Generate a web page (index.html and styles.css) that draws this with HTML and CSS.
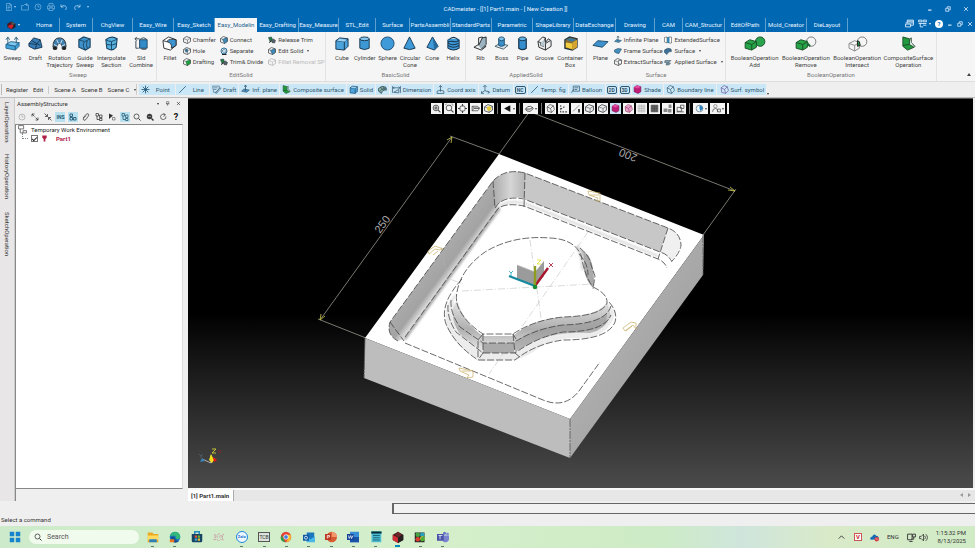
FILE: index.html
```html
<!DOCTYPE html>
<html lang="en">
<head>
<meta charset="utf-8">
<title>CADmeister</title>
<link rel="stylesheet" href="styles.css">
</head>
<body>
<svg class="defs" aria-hidden="true">
  <defs>
    <g id="doc"><path d="M3 1h7l3 3v11H3z M10 1v3h3 M5 6h6 M5 9h6 M5 12h4" fill="none" stroke="currentColor"/></g>
    <g id="open"><path d="M1 14V5h4l2-2h4v2h4v9z M9 3l3-2 2 3" fill="none" stroke="currentColor"/></g>
    <g id="clock"><circle cx="8" cy="8" r="6" fill="none" stroke="currentColor"/><path d="M8 4v4h3" fill="none" stroke="currentColor"/></g>
    <g id="print"><path d="M4 6V1h8v5 M4 12H1V6h14v6h-3 M4 10h8v5H4z M5 8h6" fill="none" stroke="currentColor"/></g>
    <g id="undo"><path d="M2 3v5h5 M2 8q4-5 9-2q4 3 0 8" fill="none" stroke="currentColor" stroke-width="1.6"/></g>
    <g id="redo"><path d="M14 3v5H9 M14 8q-4-5-9-2q-4 3 0 8" fill="none" stroke="currentColor" stroke-width="1.6"/></g>
    <g id="logo"><path d="M1 5l7-4 7 4v6l-7 4-7-4z" fill="#222"/><path d="M1 5l7-4v7l-7 4z" fill="#4b1a20"/><path d="M8 1l7 4-7 3z" fill="#555"/><path d="M3 8l5-2 4 2-4 6-6-3z" fill="#d4202e"/></g>
    <g id="cube"><path d="M2 5l4-3 9 1v8l-4 4-9-1z" fill="#4aa3dc" stroke="#17364f"/><path d="M2 5l9 1v9 M11 6l4-3" fill="none" stroke="#17364f"/><path d="M3 5l3-2 8 1-3 2z" fill="#9bd1f2"/></g>
    <g id="cylinder"><path d="M3 3v10q5 3 10 0V3" fill="#3d98d6" stroke="#17364f"/><ellipse cx="8" cy="3" rx="5" ry="2" fill="#85c4ec" stroke="#17364f"/></g>
    <g id="sphere"><circle cx="8" cy="8" r="7" fill="#3f9ad9" stroke="#205072"/></g>
    <g id="cone"><path d="M8 1l6 12q-6 3-12 0z" fill="#3f9ad9" stroke="#17364f"/></g>
    <g id="pyramid"><path d="M8 1l6 10-4 4-8-3z" fill="#3f9ad9" stroke="#17364f"/><path d="M8 1l2 14 4-4z" fill="#256b9f"/></g>
    <g id="helix"><path d="M2 3v10q6 4 12 0V3" fill="#3f9ad9"/><path d="M3 4q5-5 10 0q0 3-5 2q-5-1-6 1q3 4 11 1 M2 10q6 4 12 0 M2 13q6 4 12 0 M2 4v9 M14 4v9" fill="none" stroke="#17364f" stroke-width="1.1"/></g>
    <g id="sweep"><path d="M1 9l5-3 9 1-4 4z" fill="#80c8ef" stroke="#236791"/><path d="M1 9v4l10 2V11z M11 11l4-4v4l-4 4z" fill="#42a3da" stroke="#236791"/><path d="M3 8V2 M1 4l2-3 2 3 M12 8V2 M10 4l2-3 2 3" fill="none" stroke="#31617e"/></g>
    <g id="draft"><path d="M1 8l5-6 7 2 2 8-8 2-6-3z" fill="#377eb8" stroke="#173651"/><path d="M1 8l8 1 4-5 M9 9l-1 5 M4 5l9 5" fill="none" stroke="#173651"/></g>
    <g id="rotation"><path d="M1 12Q1 2 8 2t7 10l-4 2q0-6-3-6t-3 6z" fill="#407fae" stroke="#262f35"/><path d="M2 9l4 2 M14 9l-4 2 M5 4l2 4 M11 4L9 8" stroke="#d4e8f5"/><circle cx="3" cy="13" r="2" fill="#222"/><circle cx="13" cy="13" r="2" fill="#222"/></g>
    <g id="guide"><path d="M2 4l5-3 7 2v9l-5 3-7-3z" fill="#3e92c9" stroke="#1b4564" stroke-width="1.2"/><path d="M2 4l6 2 6-3 M8 6q-3 4 1 9 M11 5q-2 4 0 8" fill="none" stroke="#1b4564"/></g>
    <g id="interp"><path d="M2 4q6-5 12-1l-1 9q-4 5-10 1z" fill="#56b1df" stroke="#1b4564" stroke-width="1.2"/><path d="M2 4q6 4 12-1 M3 9q6 2 10-1 M8 6v9" fill="none" stroke="#1b4564"/></g>
    <g id="combine"><path d="M6 4h8v9H6z" fill="#318bc8" stroke="#1b4564"/><path d="M6 4q4-4 8 0 M1 3h5 M3 1L1 3l2 2 M2 5v8h3" fill="none" stroke="#35434b"/><path d="M8 14h5" stroke="#222"/></g>
    <g id="fillet"><path d="M1 5l6-4 8 3v6l-6 5-7-2z" fill="#fff" stroke="#303336"/><path d="M5 6q3-4 10-2v6l-5 3q1-6-5-7z" fill="#3b93d0" stroke="#303336"/><path d="M1 5l4 1" stroke="#303336"/></g>
    <g id="box"><path d="M1 5l6-4 8 3v7l-6 4-8-3z" fill="#eee" stroke="#45494c" stroke-width="1.5"/><path d="M1 5l8 3v7 M9 8l6-4" fill="none" stroke="#45494c"/></g>
    <g id="hole"><use href="#box"/><ellipse cx="7" cy="7" rx="3" ry="4" fill="#3d7191"/></g>
    <g id="greenbox"><use href="#box"/><path d="M6 7l7-3 2 6-7 5z" fill="#1ba33d" stroke="#1d5a30"/></g>
    <g id="bluebox"><use href="#box"/><path d="M5 7l8-4 2 7-6 5z" fill="#3e8ab7" stroke="#315064"/></g>
    <g id="separate"><circle cx="8" cy="8" r="6" fill="#fff" stroke="#2b719d" stroke-width="2"/><path d="M5 6l4-2 3 3v4l-4 1-3-2z" fill="#bde0f2" stroke="#304957"/><path d="M4 15h9" stroke="#222" stroke-width="2"/></g>
    <g id="trim"><path d="M1 3l6-1 2 5-5 4z" fill="#217f42" stroke="#234"/><path d="M7 9l4-3 4 3-2 5-5-1z" fill="#55656e" stroke="#222"/><path d="M2 13l5-3" stroke="#222" stroke-width="2"/></g>
    <g id="rib"><path d="M1 12l5-3V2l4-1v9l4 1-5 4z" fill="#eee" stroke="#252a2d"/><path d="M6 10l4-8 4-1v8l-5 5" fill="#9bb3c1" stroke="#252a2d"/></g>
    <g id="boss"><path d="M1 11l5-3 9 2-5 4z" fill="#d8e3e9" stroke="#49616d"/><path d="M5 3v7q3 2 6 0V3z" fill="#3990c9" stroke="#205071"/><ellipse cx="8" cy="3" rx="3" ry="2" fill="#7fc4eb" stroke="#205071"/></g>
    <g id="pipe"><path d="M4 3v10q4 3 8 0V3" fill="#358fce" stroke="#17364f" stroke-width="1.3"/><ellipse cx="8" cy="3" rx="4" ry="2" fill="#62b3e3" stroke="#17364f"/></g>
    <g id="groove"><path d="M1 6l5-5 3 1v5l3-4 3 2v6l-6 4-7-3z" fill="#eee" stroke="#252a2d"/><path d="M1 6l3 1v3l3 1V7l2-5 M9 15V8l5-3" fill="none" stroke="#252a2d"/><path d="M4 7l4-3v5l-1 2-3-1z" fill="#b7c7d0"/></g>
    <g id="container"><path d="M2 4l5-3 8 2v9l-5 3-8-2z" fill="#8a6d32" stroke="#263239" stroke-width="1.3"/><path d="M3 7l7 1v6l-7-2z" fill="#f2cd3e"/><path d="M3 4l5-2 6 2-4 2z" fill="#3b789b"/><path d="M10 7l5-3v8l-5 3z" fill="#d5a42d"/></g>
    <g id="plane"><path d="M0 10l5-5 11 1-6 6z" fill="#3e93ce" stroke="#1d4867"/></g>
    <g id="axisplane"><path d="M1 11l4-4 10 2-5 4z" fill="#4d8db5" stroke="#29536c"/><path d="M8 10V1 M6 3l2-3 2 3" stroke="#29536c" fill="none" stroke-width="1.4"/></g>
    <g id="surface"><path d="M1 6q6-6 13-2l1 5q-7-1-9 6l-5-4z" fill="#3c7097" stroke="#203c52"/></g>
    <g id="mesh"><path d="M1 6q6-6 13-2l1 5q-7-1-9 6l-5-4z" fill="#8fb5a5" stroke="#203c52" stroke-width="1.3"/><path d="M3 12q2-6 11-6 M5 4l4 6 M10 3l1 6" fill="none" stroke="#203c52"/></g>
    <g id="framesurface"><path d="M1 6q6-5 14-2l-5 9q-5 0-9-3z" fill="#418fbd" stroke="#203c52"/></g>
    <g id="extract"><use href="#box"/><path d="M9 5h6v7H9z" fill="#f2f8fb" stroke="#333"/></g>
    <g id="extended"><path d="M1 3l5-1v12l-5-2z M9 2h6v12H9z" fill="#fff" stroke="#333"/><path d="M6 2h5v12H6z" fill="#3987b3"/></g>
    <g id="applied"><path d="M2 5h12l-4 4H1z M5 10h8l-3 4H4z" fill="#7b9eb3" stroke="#384a55"/></g>
    <g id="layers"><path d="M2 4h10l3 3H5z M2 4v8h10l3-4H5l-3 4" fill="none" stroke="#444" stroke-width="1.3"/></g>
    <g id="greencube"><path d="M1 7l5-3 7 2v6l-5 3-7-2z" fill="#26a548" stroke="#174f27"/><path d="M1 7l7 2v6 M8 9l5-3" fill="none" stroke="#174f27"/></g>
    <g id="booladd"><circle cx="17" cy="6" r="5" fill="#2aa44d" stroke="#174f27"/><use href="#greencube"/></g>
    <g id="boolremove"><use href="#greencube"/><circle cx="17" cy="6" r="5" fill="#f5f5f5" stroke="#777"/><path d="M12 5q1 4 4 6" stroke="#176a34" fill="none" stroke-width="2"/></g>
    <g id="boolint"><circle cx="17" cy="6" r="5" fill="none" stroke="#777"/><path d="M3 8l6-3 5 2v6l-5 3-6-3z M3 8l6 2v6 M9 10l5-3" fill="none" stroke="#888"/><path d="M12 5l2 1 1 4-3 1z" fill="#238d42" stroke="#222"/></g>
    <g id="composite"><path d="M2 1l7 2v6l5 3-7 3-5-4z" fill="#239a40" stroke="#174f27"/><path d="M9 3l2-1v5l4 4-1 1" fill="#92aa98" stroke="#426049"/><path d="M2 10l7-1" stroke="#174f27"/></g>
    <g id="point"><path d="M8 1v14 M1 8h14 M3 3l10 10 M13 3L3 13" stroke="#174e70" stroke-width="1.4"/></g>
    <g id="line"><path d="M2 14L14 2" stroke="#174e70" stroke-width="1.3"/></g>
    <g id="sheet"><path d="M1 2h12v4L8 13H3z M3 5h7 M3 8h5 M6 14l8-9 2 1-8 9z" fill="none" stroke="#31566e"/></g>
    <g id="dimension"><path d="M1 2v12 M15 2v12 M2 5h12 M4 3L2 5l2 2 M12 3l2 2-2 2 M3 13l9-5v6z" fill="none" stroke="#31566e" stroke-width="1.3"/></g>
    <g id="coord"><path d="M8 1v11 M5 4l3-3 3 3 M8 9l-6 2v4h12v-4z" fill="none" stroke="#31566e" stroke-width="1.3"/></g>
    <g id="datum"><path d="M7 1v9 M4 3l3-2 3 2 M7 10l-6 4 M7 10l8 3 M1 11v4h4 M12 10l3 3-3 2" fill="none" stroke="#31566e" stroke-width="1.3"/></g>
    <g id="balloon"><path d="M4 2h11v9H4z M4 8l-3 6 M6 5h7 M6 8h5" fill="none" stroke="#31566e" stroke-width="1.3"/></g>
    <g id="poly"><path d="M2 5l5-4 6 2 2 7-5 5-7-2z M2 5l6 3 5-5 M8 8l2 7" fill="none" stroke="currentColor" stroke-width="1.2"/></g>
    <g id="shade"><path d="M2 4l5-3 7 2v9l-5 3-7-3z" fill="#c21c79" stroke="#651744"/><path d="M2 4l6 2 6-3-7-2z" fill="#e84da4"/></g>
    <g id="mag"><circle cx="7" cy="7" r="5" fill="none" stroke="currentColor" stroke-width="1.5"/><path d="M11 11l4 4" stroke="currentColor" stroke-width="2"/></g>
    <g id="magfull"><circle cx="7" cy="7" r="5" fill="currentColor" stroke="currentColor"/><path d="M11 11l4 4" stroke="currentColor" stroke-width="3"/><path d="M4 7h6" stroke="#ddd"/></g>
    <g id="expand"><path d="M2 7V2h5 M2 2l5 5 M14 9v5H9 M14 14L9 9" stroke="currentColor" fill="none" stroke-width="1.5"/></g>
    <g id="shrink"><path d="M7 2v5H2 M1 1l6 6 M9 14V9h5 M9 9l6 6" stroke="currentColor" fill="none" stroke-width="1.5"/></g>
    <g id="tree"><path d="M2 1h5v5H2z M9 4h5v5H9z M9 11h5v4H9z M4 6v7h5" fill="none" stroke="currentColor" stroke-width="1.5"/></g>
    <g id="blocks"><path d="M2 2h5v5H2z M2 9h5v5H2z M9 9h5v5H9z" fill="none" stroke="currentColor" stroke-width="1.8"/></g>
    <g id="grid"><path d="M1 2h6v3H1z M9 2h6v3H9z M1 8h14 M4 8v6h5 M9 11h6" fill="none" stroke="currentColor" stroke-width="1.5"/></g>
    <g id="clip"><path d="M2 10l7-8q4-2 5 2l-6 9q-5 4-6-1l6-7" fill="none" stroke="currentColor" stroke-width="1.4"/></g>
    <g id="pick"><path d="M2 1v11l8-7z" fill="currentColor"/><path d="M9 9h5v5H9z" fill="none" stroke="currentColor"/></g>
    <g id="refresh"><path d="M12 4q-7-4-9 3q0 7 6 6q6-1 5-6 M9 0l4 4-4 3" fill="none" stroke="currentColor" stroke-width="1.4"/></g>
    <g id="windows"><path d="M4 2h11v5H4z M4 4h11 M1 9h9v5H1z M1 7h3 M10 11h5V7" fill="none" stroke="currentColor" stroke-width="1.5"/></g>
    <g id="close"><path d="M3 3l10 10 M13 3L3 13" stroke="currentColor" stroke-width="2"/></g>
    <g id="restore"><path d="M2 6h8v8H2z M6 5V2h8v8h-3" fill="none" stroke="currentColor" stroke-width="2"/></g>
    <g id="minimize"><path d="M3 11h9" stroke="currentColor" stroke-width="3"/></g>
    <g id="monitor"><path d="M1 2h8v10H1z M10 2h5v5h-5z M12 7v4H8 M4 15h6" fill="none" stroke="currentColor" stroke-width="1.6"/></g>
    <g id="speaker"><path d="M1 6h3l4-4v12l-4-4H1z M10 5q3 3 0 6 M12 2q6 6 0 12" fill="none" stroke="currentColor" stroke-width="1.4"/></g>
    <g id="dots"><path d="M2 2h12v12H2z M2 5h12 M2 8h12 M2 11h12 M5 2v12 M8 2v12 M11 2v12" stroke="currentColor" stroke-width="1" fill="none"/></g>
    <linearGradient id="left" x1="441" y1="252" x2="457" y2="264" gradientUnits="userSpaceOnUse"><stop stop-color="#aaa"/><stop offset=".7" stop-color="#a3a3a3"/><stop offset="1" stop-color="#d5d5d5"/></linearGradient>
    <linearGradient id="corner"><stop stop-color="#aaa"/><stop offset=".55" stop-color="#d6d6d6"/><stop offset="1" stop-color="#b4b4b4"/></linearGradient>
    <linearGradient id="right" x2="1" y2="1"><stop stop-color="#bcbcbc"/><stop offset="1" stop-color="#969696"/></linearGradient>
    <linearGradient id="wall" x2="0" y2="1"><stop stop-color="#e2e2e2"/><stop offset=".55" stop-color="#a4a4a4"/><stop offset="1" stop-color="#eee"/></linearGradient>
    <filter id="soft"><feGaussianBlur stdDeviation="1.3"/></filter>
  </defs>
</svg>

<div class="app">
  <header class="titlebar">
    <div class="quick">
      <button aria-label="New"><svg viewBox="0 0 16 16"><use href="#doc"/></svg></button><i class="caret"></i>
      <button aria-label="Open"><svg viewBox="0 0 16 16"><use href="#open"/></svg></button>
      <button aria-label="Recent"><svg viewBox="0 0 16 16"><use href="#clock"/></svg></button>
      <button aria-label="Print"><svg viewBox="0 0 16 16"><use href="#print"/></svg></button>
      <button aria-label="Undo"><svg viewBox="0 0 16 16"><use href="#undo"/></svg></button>
      <button aria-label="Redo"><svg viewBox="0 0 16 16"><use href="#redo"/></svg></button>
      <i class="caret more"></i>
    </div>
    <h1>CADmeister - [[1] Part1.main - [ New Creation ]]</h1>
    <div class="window-buttons">
      <button aria-label="Minimize"><svg viewBox="0 0 16 16"><use href="#minimize"/></svg></button>
      <button aria-label="Restore"><svg viewBox="0 0 16 16"><use href="#restore"/></svg></button>
      <button aria-label="Close"><svg viewBox="0 0 16 16"><use href="#close"/></svg></button>
    </div>
  </header>

  <nav class="tabs">
    <button class="app-menu" aria-label="Application menu"><svg viewBox="0 0 16 16"><use href="#logo"/></svg><i class="caret"></i></button>
    <button>Home</button><button>System</button><button>ChgView</button><button>Easy_Wire</button><button>Easy_Sketch</button><button class="active">Easy_Modelin</button><button>Easy_Drafting</button><button>Easy_Measure</button><button>STL_Edit</button><button>Surface</button><button>PartsAssembli</button><button>StandardParts</button><button>Parametric</button><button>ShapeLibrary</button><button>DataExchange</button><button>Drawing</button><button>CAM</button><button>CAM_Structur</button><button>EditOfPath</button><button>Mold_Creator</button><button>DieLayout</button>
    <div class="tab-tools">
      <svg viewBox="0 0 16 16"><use href="#windows"/></svg><svg viewBox="0 0 16 16"><use href="#grid"/></svg><i class="caret"></i><span class="help">?</span><svg class="tiny" viewBox="0 0 16 16"><use href="#minimize"/></svg><svg class="tiny" viewBox="0 0 16 16"><use href="#restore"/></svg><svg class="tiny" viewBox="0 0 16 16"><use href="#close"/></svg>
    </div>
  </nav>

  <section class="ribbon">
    <div class="group">
      <div class="tools sweep-tools">
        <button class="big"><svg viewBox="0 0 16 16"><use href="#sweep"/></svg>Sweep</button>
        <button class="big"><svg viewBox="0 0 16 16"><use href="#draft"/></svg>Draft</button>
        <button class="big"><svg viewBox="0 0 16 16"><use href="#rotation"/></svg>Rotation<br>Trajectory</button>
        <button class="big"><svg viewBox="0 0 16 16"><use href="#guide"/></svg>Guide<br>Sweep</button>
        <button class="big"><svg viewBox="0 0 16 16"><use href="#interp"/></svg>Interpolate<br>Section</button>
        <button class="big"><svg viewBox="0 0 16 16"><use href="#combine"/></svg>Sld<br>Combine</button>
      </div><h2>Sweep</h2>
    </div>
    <div class="group">
      <div class="tools edit-tools">
        <button class="big"><svg viewBox="0 0 16 16"><use href="#fillet"/></svg>Fillet</button>
        <div class="stack">
          <button><svg viewBox="0 0 16 16"><use href="#box"/></svg>Chamfer</button>
          <button><svg viewBox="0 0 16 16"><use href="#hole"/></svg>Hole</button>
          <button><svg viewBox="0 0 16 16"><use href="#greenbox"/></svg>Drafting</button>
        </div>
        <div class="stack">
          <button><svg viewBox="0 0 16 16"><use href="#bluebox"/></svg>Connect</button>
          <button><svg viewBox="0 0 16 16"><use href="#separate"/></svg>Separate</button>
          <button><svg viewBox="0 0 16 16"><use href="#trim"/></svg>Trim&amp; Divide</button>
        </div>
        <div class="stack">
          <button><svg viewBox="0 0 16 16"><use href="#trim"/></svg>Release Trim</button>
          <button><svg viewBox="0 0 16 16"><use href="#bluebox"/></svg>Edit Solid<i class="caret"></i></button>
          <button disabled><svg viewBox="0 0 16 16"><use href="#box"/></svg>Fillet Removal SP</button>
        </div>
      </div><h2>EditSolid</h2>
    </div>
    <div class="group">
      <div class="tools basic-tools">
        <button class="big"><svg viewBox="0 0 16 16"><use href="#cube"/></svg>Cube</button>
        <button class="big"><svg viewBox="0 0 16 16"><use href="#cylinder"/></svg>Cylinder</button>
        <button class="big"><svg viewBox="0 0 16 16"><use href="#sphere"/></svg>Sphere</button>
        <button class="big"><svg viewBox="0 0 16 16"><use href="#cone"/></svg>Circular<br>Cone</button>
        <button class="big"><svg viewBox="0 0 16 16"><use href="#pyramid"/></svg>Cone</button>
        <button class="big"><svg viewBox="0 0 16 16"><use href="#helix"/></svg>Helix</button>
      </div><h2>BasicSolid</h2>
    </div>
    <div class="group">
      <div class="tools applied-tools">
        <button class="big"><svg viewBox="0 0 16 16"><use href="#rib"/></svg>Rib</button>
        <button class="big"><svg viewBox="0 0 16 16"><use href="#boss"/></svg>Boss</button>
        <button class="big"><svg viewBox="0 0 16 16"><use href="#pipe"/></svg>Pipe</button>
        <button class="big"><svg viewBox="0 0 16 16"><use href="#groove"/></svg>Groove</button>
        <button class="big"><svg viewBox="0 0 16 16"><use href="#container"/></svg>Container<br>Box</button>
      </div><h2>AppliedSolid</h2>
    </div>
    <div class="group">
      <div class="tools surface-tools">
        <button class="big"><svg viewBox="0 0 16 16"><use href="#plane"/></svg>Plane</button>
        <div class="stack">
          <button><svg viewBox="0 0 16 16"><use href="#axisplane"/></svg>Infinite Plane</button>
          <button><svg viewBox="0 0 16 16"><use href="#framesurface"/></svg>Frame Surface</button>
          <button><svg viewBox="0 0 16 16"><use href="#extract"/></svg>ExtractSurface</button>
        </div>
        <div class="stack">
          <button><svg viewBox="0 0 16 16"><use href="#extended"/></svg>ExtendedSurface</button>
          <button><svg viewBox="0 0 16 16"><use href="#surface"/></svg>Surface<i class="caret"></i></button>
          <button><svg viewBox="0 0 16 16"><use href="#applied"/></svg>Applied Surface<i class="caret"></i></button>
        </div>
      </div><h2>Surface</h2>
    </div>
    <div class="group">
      <div class="tools bool-tools">
        <button class="big wide"><svg viewBox="0 0 23 16"><use href="#booladd"/></svg>BooleanOperation<br>Add</button>
        <button class="big wide"><svg viewBox="0 0 23 16"><use href="#boolremove"/></svg>BooleanOperation<br>Remove</button>
        <button class="big wide"><svg viewBox="0 0 23 16"><use href="#boolint"/></svg>BooleanOperation<br>Intersect</button>
        <button class="big"><svg viewBox="0 0 16 16"><use href="#composite"/></svg>CompositeSurface<br>Operation</button>
      </div><h2>BooleanOperation</h2>
    </div>
    <button class="collapse" aria-label="Collapse ribbon"><i class="caret up"></i></button>
  </section>

  <div class="filters">
    <div class="scenes"><button>Register</button><button>Edit</button><i></i><button>Scene A</button><button>Scene B</button><button>Scene C</button><span class="caret"></span></div>
    <div class="filter-list">
      <button><svg viewBox="0 0 16 16"><use href="#point"/></svg><span>Point</span></button>
      <button><svg viewBox="0 0 16 16"><use href="#line"/></svg><span>Line</span></button>
      <button><svg viewBox="0 0 16 16"><use href="#sheet"/></svg>Draft</button>
      <button><svg viewBox="0 0 16 16"><use href="#axisplane"/></svg>Inf. plane</button>
      <button><svg viewBox="0 0 16 16"><use href="#composite"/></svg>Composite surface</button>
      <button><svg viewBox="0 0 16 16"><use href="#cube"/></svg>Solid</button>
      <button aria-label="Mesh"><svg viewBox="0 0 16 16"><use href="#mesh"/></svg></button>
      <button><svg viewBox="0 0 16 16"><use href="#dimension"/></svg>Dimension</button>
      <button><svg viewBox="0 0 16 16"><use href="#coord"/></svg>Coord axis</button>
      <button><svg viewBox="0 0 16 16"><use href="#datum"/></svg>Datum</button>
      <button><b>NC</b></button>
      <button><svg viewBox="0 0 16 16"><use href="#line"/></svg>Temp. fig</button>
      <button><svg viewBox="0 0 16 16"><use href="#balloon"/></svg>Balloon</button>
      <button><b>2D</b></button>
      <button><b>3D</b></button>
      <button><svg viewBox="0 0 16 16"><use href="#shade"/></svg>Shade</button>
      <button><svg viewBox="0 0 16 16"><use href="#poly"/></svg>Boundary line</button>
      <button class="violet"><svg viewBox="0 0 16 16"><use href="#poly"/></svg>Surf. symbol</button>
      <i class="caret"></i>
    </div>
  </div>

  <main class="workspace">
    <nav class="side-tabs"><button>LayerOperation</button><button>HistoryOperation</button><button>SketchOperation</button></nav>

    <aside class="panel">
      <header><h2>AssemblyStructure</h2><i class="caret"></i><svg viewBox="0 0 16 16"><path d="M5 2h7v7H5z M3 9h11 M8 9v6" fill="none" stroke="currentColor" stroke-width="1.5"/></svg><svg viewBox="0 0 16 16"><use href="#close"/></svg></header>
      <div class="panel-tools">
        <button aria-label="History" class="dim"><svg viewBox="0 0 16 16"><use href="#clock"/></svg></button>
        <button aria-label="Expand"><svg viewBox="0 0 16 16"><use href="#expand"/></svg></button>
        <button aria-label="Shrink"><svg viewBox="0 0 16 16"><use href="#shrink"/></svg></button>
        <button class="on">INS</button>
        <button aria-label="Layout" class="on"><svg viewBox="0 0 16 16"><use href="#blocks"/></svg></button>
        <button aria-label="Attach"><svg viewBox="0 0 16 16"><use href="#clip"/></svg></button>
        <button aria-label="Tree"><svg viewBox="0 0 16 16"><use href="#tree"/></svg></button>
        <button aria-label="Pick"><svg viewBox="0 0 16 16"><use href="#pick"/></svg></button>
        <button aria-label="Structure" class="on"><svg viewBox="0 0 16 16"><use href="#tree"/></svg></button>
        <button aria-label="Search"><svg viewBox="0 0 16 16"><use href="#mag"/></svg></button>
        <button aria-label="Zoom out"><svg viewBox="0 0 16 16"><use href="#magfull"/></svg></button>
        <button aria-label="Refresh"><svg viewBox="0 0 16 16"><use href="#refresh"/></svg></button>
        <button class="question">?</button>
      </div>
      <ul class="assembly">
        <li><svg viewBox="0 0 16 16"><path d="M1 1h9v6H1z M4 7v7h5 M9 10h6v4H9z" fill="#fff" stroke="#555" stroke-width="1.4"/></svg>Temporary Work Environment</li>
        <li class="child"><i class="branch"></i><input id="part" type="checkbox" checked><svg viewBox="0 0 16 16"><path d="M3 1h10v5l-3 3v6H6V9L3 6z" fill="#b02046"/></svg><label for="part">Part1</label></li>
      </ul>
      <div class="panel-foot"></div>
    </aside>

    <section class="document">
      <div class="canvas">
        <svg class="model" viewBox="188 99 785 389" preserveAspectRatio="xMidYMid slice" role="img" aria-label="Part1 model">
          <g stroke="#98958a" stroke-width=".8" fill="none">
            <path d="M499 154L450 136 M452 137L320 320 M318 319l48 19 M499 154l31-43 M528 111l207 80 M703 235l33-46"/>
            <path d="M452 137l-1 6 M452 137l-5 3 M320 320l1-6 M320 320l5-4 M735 191l-7-1 M735 191l-5-4 M528 111l7 1" stroke="#d0cc45"/>
          </g>
          <g class="measure"><text transform="translate(380 234) rotate(-54)">250</text><text transform="translate(638 155) rotate(201)">200</text></g>
          <path d="M499 154L704 235L570 419L365 338z" fill="#fff"/>
          <path d="M365 338L570 419V458L364 378z" fill="#bdbdbd"/>
          <path d="M704 235L703 275L570 458V419z" fill="url(#right)"/>
          <path d="M499 208L404 339" stroke="#888" stroke-width="4" opacity=".7" filter="url(#soft)"/>
          <path d="M390 322L493 181L497 207L404 339L398 341Q386 335 390 322z" fill="url(#left)"/>
          <path d="M493 181Q505 168 525 173V198Q503 195 495 208z" fill="url(#corner)"/>
          <path d="M525 173L668 228L660 252L524 199z" fill="#c7c7c7"/>
          <path d="M668 228Q681 233 681 246L673 260L660 252z" fill="#f0f0f0"/>
          <path d="M496 210Q503 199 524 203L658 256" stroke="#bbb" stroke-width="2" fill="none" opacity=".6" filter="url(#soft)"/>
          <path d="M457 292Q451 303 458 313Q468 330 483 336H513Q533 319 563 317Q599 316 607 302L615 312Q613 330 590 338Q558 336 540 347Q527 357 515 360L482 361Q455 348 447 327Q441 306 457 292z" fill="#ececec"/>
          <path d="M483 336H513Q533 319 563 317Q599 316 607 302L611 316Q605 330 590 333Q560 331 537 340L515 353H483L460 334Q447 315 457 300Q464 323 483 336z" fill="url(#wall)" opacity=".85"/>
          <path d="M483 343H514V353H483z" fill="#aaa"/>
          <path d="M514 343Q534 327 563 325Q595 324 607 313L606 324Q595 332 563 332Q538 337 515 352z" fill="#999" opacity=".65"/>
          <path d="M575 245Q584 252 584 270Q586 281 593 288L594 280Q594 264 588 255z" fill="#aaa"/>
          <path d="M577 246Q583 255 583 270" stroke="#ddd" stroke-width="4" fill="none" filter="url(#soft)"/>
          <g class="edges">
            <path d="M398 341Q386 335 390 322L493 181Q505 168 525 173L668 228Q681 233 681 246Q679 254 672 261"/>
            <path d="M405 343L543 400Q565 409 579 391L600 362 M405 337L497 210Q503 202 524 206L658 259Q665 262 667 268"/>
            <path d="M493 181L495 208Q503 195 524 199L660 252Q668 254 672 262 M525 173L524 207 M668 228L658 259 M390 322L404 341"/>
            <path d="M457 292Q461 269 485 252Q513 235 550 238Q574 239 581 255Q585 277 593 287Q608 294 607 303Q602 316 563 317Q534 320 513 334H483Q466 323 459 309Q455 301 457 292z"/>
            <path d="M451 300Q450 313 460 327L483 343H513Q534 329 563 325Q606 324 611 306"/>
            <path d="M448 305Q447 318 456 332L483 353H515Q537 337 563 332Q604 332 611 315"/>
            <path d="M462 279Q439 304 446 324Q455 345 478 360L515 360Q535 344 563 340Q608 340 615 322Q618 312 609 302"/>
            <path d="M580 248Q590 256 591 265L595 276L593 289 M579 254Q588 263 588 275"/>
            <path d="M483 334V353L478 360 M513 334L515 353L521 358 M483 334L478 340V358 M513 334L516 339"/>
          </g>
          <path d="M570 419V458 M365 338L364 378 M703 235V275" stroke="#555" stroke-width=".8" stroke-dasharray="8 1 2 1" fill="none"/>
          <path d="M588 232L489 374 M462 291L593 284 M530 240L541 318 M441 247L447 278L463 284" stroke="#b5b5b5" stroke-width=".5" stroke-dasharray="7 2 1 2" fill="none"/>
          <g fill="none" stroke="#c8ae60" stroke-width=".7">
            <path d="M428 251l7-5 8 3-3 1-5-1-6 5z M433 255l5-4"/><path d="M588 191l12 2v8h-4l2-3-9-3z M590 195h9"/><path d="M623 328l8-6 5 1v6l-3-4-8 6z M626 331l6-5"/><path d="M459 368l14 3v6l-6 1 2-3-9-4z M462 371h9"/>
          </g>
          <path d="M517 265l18 7 9-11v15l-9 9-18-6z" fill="#9b9b9b"/><path d="M517 265l18 7v12" fill="none" stroke="#bbb" stroke-width=".7"/>
          <g stroke-width="2.4" fill="none"><path d="M535 286l-26-10" stroke="#15899d"/><path d="M535 286l13-18" stroke="#a7162d"/><path d="M535 286v-20" stroke="#8e9d1e"/></g><circle cx="535" cy="287" r="2.3" fill="#168c35"/>
          <g stroke-width=".8" fill="none"><path d="M509 271l2 2 2-2 M511 273v3" stroke="#18a5b9"/><path d="M549 263l4 4 M553 263l-4 4" stroke="#a7162d"/><path d="M537 260h4l-4 4h4" stroke="#dede26"/></g>
          <path d="M211 463v-8 M211 463l-9-4 M211 463l4-5" stroke="#ddd" fill="none" stroke-width=".7"/><path d="M209 460l2-6 3 6-2 3z" fill="#f2dc15"/><path d="M213 457l4 3-3 2z" fill="#e11"/><path d="M202 458l3 3-5 1z" fill="#3683ba"/>
          <g stroke-width=".8" fill="none"><path d="M212 449h4l-4 4h4" stroke="#e4df30"/><path d="M218 450l3 3 M221 450l-3 3" stroke="#8f1f27"/><path d="M199 454l2 2 2-2 M201 456v2" stroke="#50656c"/></g>
        </svg>
        <div class="view-tools">
          <button aria-label="Zoom area"><svg viewBox="0 0 16 16"><use href="#mag"/><circle cx="7" cy="7" r="3" fill="#777"/></svg></button>
          <button aria-label="Zoom"><svg viewBox="0 0 16 16"><use href="#mag"/><path d="M1 2V0h3 M10 0h4v4" fill="none" stroke="#777"/></svg></button>
          <button aria-label="Fit"><svg viewBox="0 0 16 16"><circle cx="8" cy="8" r="5" fill="none" stroke="#444" stroke-width="1.4"/><path d="M8 0v4 M8 12v4 M0 8h4 M12 8h4" stroke="#444" stroke-width="2"/></svg></button>
          <button aria-label="Previous view"><svg viewBox="0 0 16 16"><use href="#layers"/></svg></button>
          <button aria-label="View cube"><svg viewBox="0 0 16 16"><use href="#box"/><circle cx="9" cy="8" r="4" fill="#e3ca32"/></svg></button><i class="bar"></i>
          <button class="drop" aria-label="Arrow"><svg viewBox="0 0 16 16"><path d="M2 8l11-6v12z" fill="#111"/></svg><i class="caret"></i></button><i class="bar"></i>
          <button class="drop" aria-label="Rotate"><svg viewBox="0 0 16 16"><path d="M1 9q3-6 9-5l5 4-6 5q-7 1-8-4h8l5-3" fill="none" stroke="#444" stroke-width="1.5"/></svg><i class="caret"></i></button><i class="bar"></i>
          <button aria-label="Wireframe"><svg viewBox="0 0 16 16"><use href="#poly"/></svg></button>
          <button aria-label="Points"><svg viewBox="0 0 16 16"><path d="M3 2v12h11 M3 9l8-5" stroke="#444" fill="none" stroke-width="2" stroke-dasharray="3 2"/></svg></button>
          <button aria-label="Line display"><svg viewBox="0 0 16 16"><path d="M2 13L13 2" stroke="#444"/><path d="M11 9h3v6h-3z" fill="#222"/></svg></button>
          <button aria-label="Hidden lines"><svg viewBox="0 0 16 16"><use href="#box"/></svg></button>
          <button aria-label="Outline"><svg viewBox="0 0 16 16"><use href="#box"/></svg></button>
          <button class="selected" aria-label="Shaded"><svg viewBox="0 0 16 16"><use href="#shade"/></svg></button>
          <button class="pink" aria-label="Transparent"><svg viewBox="0 0 16 16"><circle cx="8" cy="8" r="6" fill="#e8a2c8"/><use href="#poly"/></svg></button>
          <button class="light" aria-label="Light grid"><svg viewBox="0 0 16 16"><use href="#dots"/></svg></button>
          <button aria-label="Dark grid"><svg viewBox="0 0 16 16"><path d="M2 2h12v12H2z" fill="#777"/><use href="#dots"/></svg></button>
          <button aria-label="Section"><svg viewBox="0 0 16 16"><path d="M1 8h7v6H1z M10 1h5v6h-5z M9 9h6v6H9z" fill="#888"/></svg></button>
          <button aria-label="Display"><svg viewBox="0 0 16 16"><path d="M2 6h8v7H2z M8 2h6v6H8z M1 14h13" fill="none" stroke="#444" stroke-width="1.3"/></svg></button><i class="bar"></i>
          <button class="drop" aria-label="Material"><svg viewBox="0 0 16 16"><circle cx="8" cy="8" r="6" fill="#e8f4fb" stroke="#3a5364"/><path d="M8 8V2q6 1 6 6l-4 5z" fill="#2d83c0"/></svg><i class="caret"></i></button>
          <button class="drop" aria-label="User"><svg viewBox="0 0 16 16"><circle cx="6" cy="4" r="3" fill="none" stroke="#555"/><path d="M1 14q0-6 5-6t4 6 M10 9h5v5h-5z" fill="none" stroke="#555" stroke-width="1.4"/></svg><i class="caret"></i></button>
          <i class="end"></i>
        </div>
      </div>
      <div class="doc-tabs"><button>[1] Part1.main</button><span><i class="arrow prev"></i><i class="arrow next"></i></span></div>
    </section>
  </main>

  <div class="command"><input type="text" aria-label="Command"></div>
  <div class="status">Select a command</div>

  <footer class="taskbar">
    <button class="start" aria-label="Start"><svg viewBox="0 0 16 16"><path d="M1 1h6v6H1z M9 1h6v6H9z M1 9h6v6H1z M9 9h6v6H9z" fill="#1683cd"/></svg></button>
    <div class="search"><svg viewBox="0 0 16 16"><use href="#mag"/></svg><input type="text" placeholder="Search" aria-label="Search"></div>
    <div class="apps">
      <button class="run" aria-label="Files"><svg viewBox="0 0 16 16"><path d="M1 2h6l2 2h6v11H1z" fill="#eba922"/><path d="M1 6h14v6H1z" fill="#ffdb62"/><path d="M3 11h10v4H3z" fill="#2d81bd"/></svg></button>
      <button class="run" aria-label="Edge"><svg viewBox="0 0 16 16"><circle cx="8" cy="8" r="7" fill="#1676bd"/><path d="M1 7Q4-1 12 2q5 5 2 8-5 2-5-1 1-5-8-2z" fill="#36b879"/><path d="M2 9q5-4 6 1 1 4 6 3-6 5-10 0z" fill="#164e91"/><path d="M1 11h6v4H1z" fill="#e97825"/></svg></button>
      <button aria-label="Store"><svg viewBox="0 0 16 16"><path d="M5 4V1h6v3" fill="none" stroke="#278ac0" stroke-width="2"/><path d="M1 4h14v9q0 2-2 2H3q-2 0-2-2z" fill="#174465"/><path d="M5 6h3v3H5z" fill="#e45438"/><path d="M9 6h3v3H9z" fill="#6baf34"/><path d="M5 10h3v3H5z" fill="#38a2db"/><path d="M9 10h3v3H9z" fill="#ebbf31"/></svg></button>
      <button aria-label="Mesh tool"><svg viewBox="0 0 16 16"><path d="M2 4l3 3 3-4 3 4 3-3-2 5 2 3-4-1-2 2-3-2-4 1 2-4z M2 8h12" stroke="#c99aa4" stroke-dasharray="2 1" stroke-width="1.2" fill="none"/></svg></button>
      <button class="run zalo"><span>Zalo</span></button>
      <button class="run tcb"><span>TCB</span></button>
      <button class="run" aria-label="Chrome"><svg viewBox="0 0 16 16"><circle cx="8" cy="8" r="7" fill="#e54335"/><path d="M2 5l5 10Q0 14 2 5z" fill="#2ba24c"/><path d="M8 5h6q3 8-6 10l3-5z" fill="#f6c32d"/><path d="M1 8l5 7q-6-2-5-7z" fill="#2ba24c"/><circle cx="8" cy="8" r="3" fill="#3d7fe0" stroke="#fff"/></svg></button>
      <button class="run" aria-label="Outlook"><svg viewBox="0 0 16 16"><path d="M5 2h10v12H5z" fill="#1b76bc"/><path d="M5 7l5 4 6-4v8H5z" fill="#4ab7e8"/><path d="M0 5h8v8H0z" fill="#0c5aa4"/><circle cx="4" cy="9" r="2" fill="none" stroke="#fff"/></svg></button>
      <button class="run" aria-label="PowerPoint"><svg viewBox="0 0 16 16"><circle cx="9" cy="8" r="7" fill="#d85a30"/><path d="M9 1q7 1 7 7H9z" fill="#f3976d"/><path d="M0 4h8v8H0z" fill="#b93820"/><path d="M3 10V6h3v2H3" stroke="#fff" fill="none"/></svg></button>
      <button class="run" aria-label="Word"><svg viewBox="0 0 16 16"><path d="M4 1h12v14H4z" fill="#368dd5"/><path d="M4 8h12v7H4z" fill="#1951a6"/><path d="M0 4h9v8H0z" fill="#124398"/><path d="M2 6l1 4 2-4 1 4 2-4" stroke="#fff" fill="none"/></svg></button>
      <button class="run" aria-label="Notes"><svg viewBox="0 0 16 16"><path d="M2 2h13v13H2z" fill="#4ebbd1"/><path d="M2 1h13v2H2z M4 6h9 M4 9h9 M4 12h9" stroke="#17677a" stroke-width="1.3"/></svg></button>
      <button class="run current" aria-label="CADmeister"><svg viewBox="0 0 16 16"><path d="M1 5l7-4 7 4v7l-7 4-7-4z" fill="#39191b"/><path d="M1 5l7 4v7l-7-4z" fill="#d22e37"/><path d="M8 9l7-4v7l-7 4z" fill="#242020"/><path d="M8 1l5 4-5 4-4-4z" fill="#6d292b"/></svg></button>
      <button class="run" aria-label="Viewer"><svg viewBox="0 0 16 16"><path d="M1 2h13v13H1z" fill="#292929"/><circle cx="5" cy="5" r="3" fill="#45a544"/><circle cx="11" cy="5" r="3" fill="#27a2bc"/><circle cx="5" cy="11" r="3" fill="#db3e31"/><circle cx="11" cy="10" r="3" fill="#eabf26"/><path d="M9 9l5-2v6l-5 1z" fill="#4caf35"/></svg></button>
      <button class="run" aria-label="Teams"><svg viewBox="0 0 16 16"><circle cx="10" cy="3" r="2" fill="#6571c7"/><circle cx="14" cy="4" r="2" fill="#8993dc"/><path d="M7 6h9v6q-3 5-8 2z" fill="#7b83d0"/><path d="M0 4h9v9H0z" fill="#4852a9"/><path d="M2 6h5 M4 6v5" stroke="#fff"/></svg></button>
    </div>
    <div class="tray"><svg viewBox="0 0 16 16"><path d="M3 10l5-5 5 5" fill="none" stroke="currentColor" stroke-width="1.6"/></svg><span class="vbox">V</span><svg viewBox="0 0 16 16"><path d="M1 12q-2-5 3-6 3-6 7-1 5 0 4 6z" fill="#176db4"/><circle cx="12" cy="11" r="4" fill="#d93d42"/><path d="M10 9l4 4" stroke="#fff"/></svg><span class="lang">ENG</span><svg viewBox="0 0 16 16"><use href="#monitor"/></svg><svg viewBox="0 0 16 16"><use href="#speaker"/></svg><time>1:15:32 PM<br>8/13/2025</time></div>
  </footer>
</div>
</body>
</html>
```

FILE: styles.css
```css
* { box-sizing: border-box; }
body { margin: 0; font: 6px/8px Roboto, "Open Sans", sans-serif; color: #333; }
.defs { position: absolute; width: 0; height: 0; }
button { font: inherit; color: inherit; background: none; border: 0; padding: 0; margin: 0; white-space: nowrap; }
h1, h2 { font: inherit; margin: 0; }
svg { flex: none; display: block; overflow: visible; }

.app { display: flex; flex-direction: column; height: 100vh; overflow: hidden; background: #f0efef; }
.caret { display: inline-block; flex: none; width: 0; height: 0; border: 1px solid transparent; border-top: 2px solid currentColor; border-bottom: 0; }
.caret.up { border-top: 0; border-bottom: 3px solid currentColor; border-left-width: 2px; border-right-width: 2px; }

.titlebar { flex: none; height: 18px; display: grid; grid-template-columns: 1fr auto 1fr; background: #0067b3; color: #e8f4ff; }
.titlebar h1 { padding: 5px 0 0 36px; }
.quick { display: flex; align-items: flex-start; gap: 5px; padding: 3px 5px; color: #a9d0ed; }
.quick svg { width: 8px; height: 8px; }
.quick .caret { margin: 3px 0 0 -4px; }
.quick .more { margin-left: 1px; }
.window-buttons { display: flex; justify-content: flex-end; gap: 12px; padding: 3px 6px; }
.window-buttons svg { width: 6px; height: 6px; }

.tabs { flex: none; height: 14px; display: grid; grid-template-columns: 29fr 31fr 33fr 40fr 41fr 41fr 42fr 42fr 40fr 37fr 34fr 41fr 41fr 41fr 41fr 42fr 39fr 28fr 42fr 41fr 41fr 41fr 127fr; background: #0067b3; color: #e8f4ff; }
.tabs > button { min-width: 0; overflow: hidden; border-right: 1px solid #5d9fcf; }
.tabs > .app-menu { display: flex; align-items: center; gap: 2px; padding-left: 7px; border: 0; }
.app-menu svg { width: 9px; height: 9px; }
.tabs > .active { background: #f5f5f5; color: #235e8c; border: 0; }
.tab-tools { display: flex; align-items: center; justify-content: flex-end; gap: 4px; padding: 0 2px 3px 0; }
.tab-tools svg { width: 9px; height: 9px; }
.tab-tools .tiny { width: 6px; height: 6px; }
.tab-tools .caret { margin-left: -2px; }
.help { width: 8px; height: 8px; border-radius: 4px; background: #fff; color: #0067b3; text-align: center; font-weight: bold; }

.ribbon { flex: none; height: 50px; display: grid; grid-template-columns: 157fr 169fr 140fr 121fr 139fr 211fr 38fr; background: #f5f5f5; border-bottom: 1px solid #dedede; color: #444; }
.group { min-width: 0; display: flex; flex-direction: column; justify-content: space-between; border-right: 1px solid #e3e3e3; padding-bottom: 2px; }
.group h2 { text-align: center; color: #777; }
.tools { display: grid; padding-top: 4px; }
.sweep-tools { grid-template-columns: 25fr 21fr 28fr 23fr 30fr 30fr; }
.edit-tools { grid-template-columns: 26fr 37fr 49fr 57fr; }
.basic-tools { grid-template-columns: 22fr 24fr 22fr 23fr 22fr 20fr; padding-left: 5px; padding-right: 2px; }
.applied-tools { grid-template-columns: 21fr 22fr 20fr 24fr 28fr; padding-left: 4px; padding-right: 2px; }
.surface-tools { grid-template-columns: 27fr 51fr 61fr; }
.bool-tools { grid-template-columns: repeat(4, 1fr); padding-left: 3px; padding-right: 2px; }
.big { min-width: 0; display: flex; flex-direction: column; align-items: center; align-self: start; text-align: center; line-height: 7px; }
.big svg { width: 15px; height: 15px; margin-bottom: 3px; }
.big.wide svg { width: 22px; }
.stack { min-width: 0; display: flex; flex-direction: column; gap: 3px; }
.stack button { display: flex; align-items: center; gap: 2px; height: 8px; }
.stack svg { width: 8px; height: 8px; }
.stack .caret { margin-left: 2px; }
.stack button:disabled { color: #bbb; }
.stack button:disabled svg { opacity: .4; }
.collapse { align-self: end; justify-self: end; padding: 0 4px 3px 0; }

.filters { flex: none; height: 16px; display: grid; grid-template-columns: 138fr 837fr; padding: 2px 0; border-bottom: 1px solid #bbb; }
.scenes { display: flex; align-items: center; gap: 5px; margin-left: 1px; padding-left: 4px; border-left: 1px solid #bbb; border-right: 1px solid #ccc; margin-right: 2px; }
.scenes i { border-left: 1px solid #ccc; height: 8px; }
.filter-list { display: grid; column-gap: 1px; grid-template-columns: 36fr 33fr 28fr 40fr 66fr 28fr 13fr 43fr 44fr 34fr 13fr 40fr 36fr 12fr 12fr 31fr 53fr 49fr 208fr; }
.filter-list button { min-width: 0; overflow: hidden; display: flex; align-items: center; justify-content: center; gap: 2px; background: #cae7f7; color: #31566e; }
.filter-list svg { width: 9px; height: 9px; }
.filter-list span { padding: 0 4px; }
.filter-list b { border: 1px solid #31566e; border-radius: 2px; line-height: 6px; padding: 0 1px; font-size: 5px; }
.filter-list .violet svg { color: #67569a; }
.filter-list > .caret { align-self: end; }

.workspace { flex: 1; min-height: 0; display: flex; }
.side-tabs { flex: none; width: 15px; display: flex; flex-direction: column; align-items: center; gap: 12px; padding-top: 4px; border-right: 1px solid #ccc; background: #e8e6e6; }
.side-tabs button { writing-mode: vertical-rl; }
.panel { flex: none; width: 168px; display: flex; flex-direction: column; margin-right: 5px; }
.panel header { height: 11px; display: flex; align-items: center; gap: 6px; padding: 0 2px; }
.panel header h2 { flex: 1; }
.panel header svg { width: 5px; height: 5px; }
.panel-tools { height: 15px; display: flex; align-items: center; justify-content: space-between; padding: 0 2px; }
.panel-tools button { width: 10px; height: 10px; display: grid; place-items: center; }
.panel-tools svg { width: 8px; height: 8px; }
.panel-tools .on { background: #b8e0ee; color: #245b76; font-size: 5px; font-weight: bold; }
.panel-tools .dim { color: #888; }
.panel-tools .question { font-size: 9px; font-weight: bold; color: #111; }
.assembly { flex: 1; margin: 0; padding: 0; list-style: none; background: #fff; border: 1px solid #888; border-right-color: #ddd; color: #222; }
.assembly li { display: flex; align-items: center; height: 9px; gap: 4px; padding-left: 2px; }
.assembly svg { width: 9px; height: 9px; }
.assembly .child { gap: 3px; padding-left: 6px; color: #b02046; font-weight: bold; }
.assembly .child svg { width: 7px; height: 7px; margin-right: 5px; }
.branch { width: 6px; height: 6px; border: 1px dotted #888; border-width: 0 0 1px 1px; margin-bottom: 5px; }
.assembly input { appearance: none; width: 7px; height: 7px; margin: 0; border: 1px solid #777; background: #fff; display: grid; place-items: center; }
.assembly input:checked::after { content: ""; width: 4px; height: 2px; border: 1px solid #333; border-width: 0 0 1px 1px; transform: rotate(-45deg); }
.panel-foot { flex: none; height: 12px; border-left: 1px solid #888; }

.document { flex: 1; min-width: 0; display: flex; flex-direction: column; }
.canvas { flex: 1; min-height: 0; position: relative; margin-right: 2px; padding-top: 4px; overflow: hidden; background: linear-gradient(#000 55%, #171717 68%, #4b4b4b); border-top: 1px solid #555; }
.model { position: absolute; inset: 0; width: 100%; height: 100%; }
.edges { fill: none; stroke: #444; stroke-width: .8; stroke-dasharray: 7 2; }
.measure { fill: #aaa; font-family: "Liberation Sans", sans-serif; font-size: 11px; }
.view-tools { position: relative; display: flex; gap: 2px; padding-left: 31%; color: #444; }
.view-tools button { width: 11px; height: 11px; flex: none; display: flex; align-items: center; justify-content: center; gap: 1px; background: #f4f4f4; }
.view-tools .drop { width: 15px; }
.view-tools svg { width: 9px; height: 9px; }
.view-tools .selected { background: #cce7f7; }
.view-tools .pink { color: #963e70; }
.view-tools .light { color: #aaa; }
.bar { width: 1px; margin: 0 1px; background: #777; }
.end { width: 2px; background: #f4f4f4; }
.doc-tabs { flex: none; height: 13px; display: flex; justify-content: space-between; align-items: flex-start; background: #e7e7e7; border-top: 2px solid #f8f8f8; }
.doc-tabs button { height: 11px; padding: 0 4px 0 3px; background: #fff; border-right: 1px solid #aaa; font-weight: bold; }
.doc-tabs span { display: flex; gap: 5px; padding: 3px 4px; }
.arrow { border: 2px solid transparent; }
.arrow.prev { border-right: 3px solid #999; border-left: 0; }
.arrow.next { border-left: 3px solid #999; border-right: 0; }

.command { flex: none; height: 14px; padding: 2px 0 0 40%; }
.command input { display: block; width: 100%; height: 11px; padding: 0 2px; font: inherit; border: 1px solid #666; border-left-width: 2px; background: #f3f2f2; margin-left: 2px; }
.status { flex: none; height: 11px; padding: 1px 1px 0; }

.taskbar { flex: none; height: 22px; display: flex; align-items: center; padding: 0 9px; background: linear-gradient(90deg, #cdebca, #d5efcb 45%, #cdebc6 68%, #cfe5dc 76%, #d9eac9 85%, #d0ebc6); }
.start svg { width: 12px; height: 12px; }
.search { display: flex; align-items: center; gap: 5px; width: 110px; height: 14px; margin: 0 7px 0 8px; padding: 0 5px; border-radius: 7px; background: #f0faed; color: #333; }
.search svg { width: 8px; height: 8px; }
.search input { flex: 1; min-width: 0; border: 0; padding: 0; background: none; font: inherit; font-size: 7px; }
.search input::placeholder { color: #555; opacity: 1; }
.apps { width: 317px; flex: 0 1 auto; width: 32%; padding-right: 3px; display: flex; justify-content: space-between; align-self: stretch; }
.apps button { width: 13px; display: grid; place-items: center; border-bottom: 1px solid transparent; }
.apps svg { width: 12px; height: 12px; }
.apps .run { background: linear-gradient(#677, #677) center bottom / 3px 1px no-repeat; }
.apps .current { background: linear-gradient(#08b, #08b) center bottom / 5px 2px no-repeat; }
.zalo span { width: 12px; height: 12px; border-radius: 6px; background: #eef8ff; border: 1px solid #2185df; color: #176cd0; font-size: 4px; line-height: 10px; font-weight: bold; text-align: center; }
.tcb span { width: 12px; height: 10px; background: #dce2dc; border: 1px solid #555; font-size: 5px; line-height: 8px; text-align: center; }
.tray { margin-left: auto; display: flex; align-items: center; gap: 8px; }
.tray svg { width: 9px; height: 9px; }
.tray svg + svg { margin-left: -5px; }
.vbox { width: 8px; height: 8px; border: 1px solid #c55; background: #fff; color: #c22; font-weight: bold; line-height: 6px; text-align: center; }
.tray time { text-align: right; }
```
